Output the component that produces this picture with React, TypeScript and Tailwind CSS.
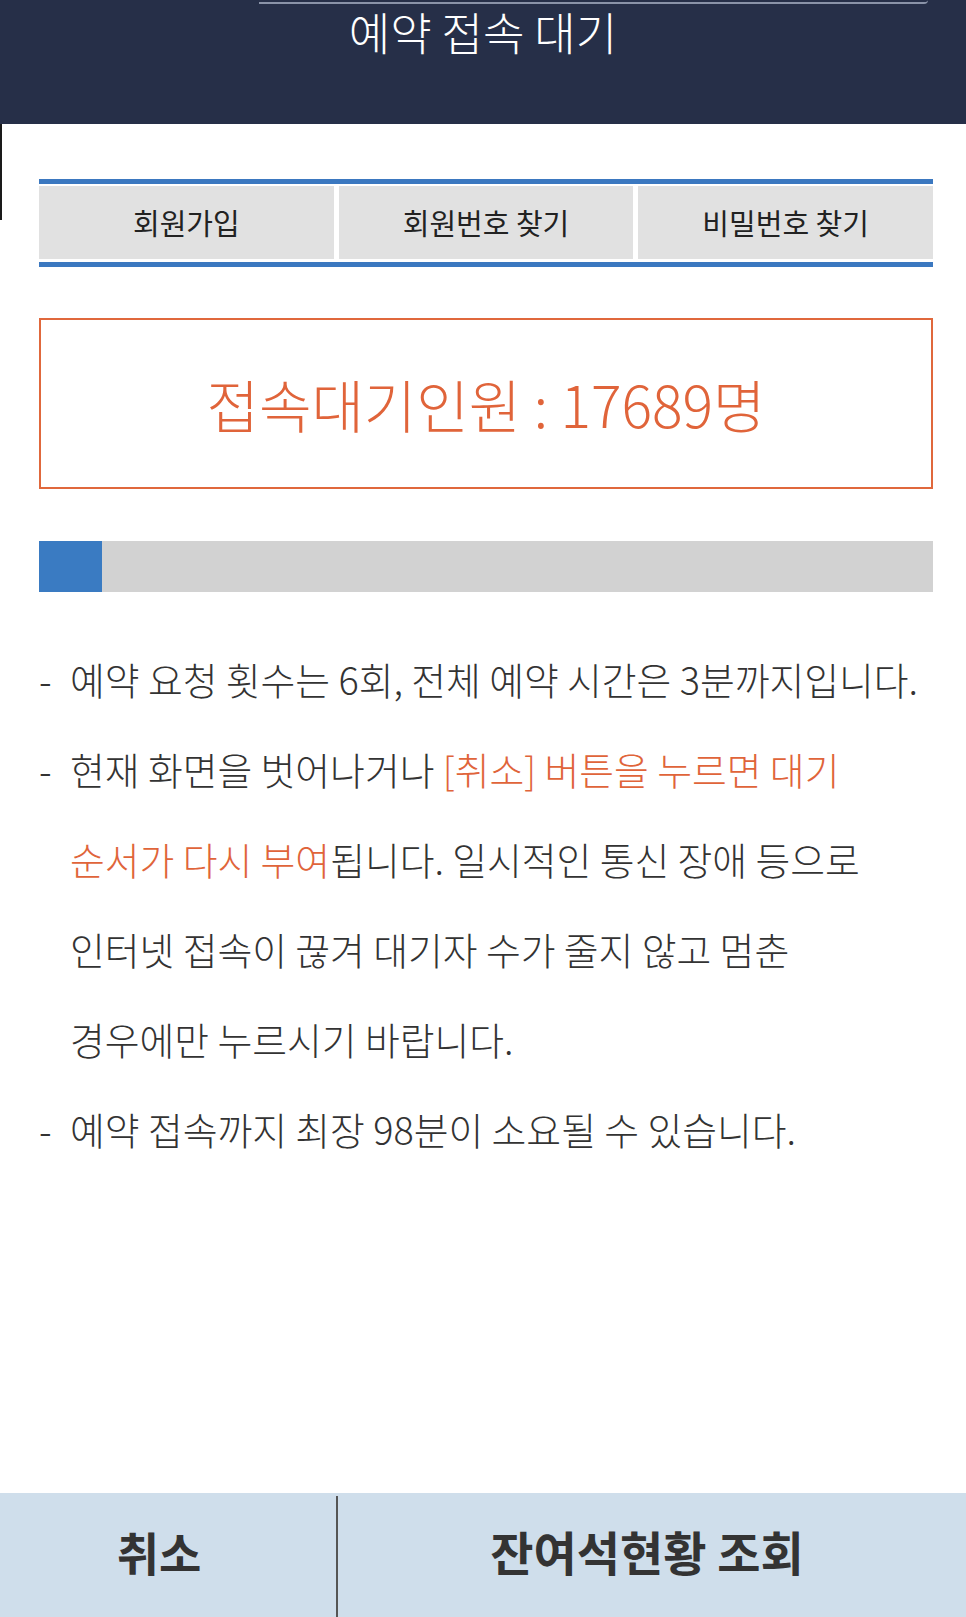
import React from "react";

const tabs = ["회원가입", "회원번호 찾기", "비밀번호 찾기"];

const Line = ({ dash, children }: { dash?: boolean; children: React.ReactNode }) => (
  <div className="flex h-[90px] items-center whitespace-nowrap">
    <span className="w-[31px] shrink-0">{dash ? "-" : ""}</span>
    <span>{children}</span>
  </div>
);

const App = () => {
  return (
    <div
      className="relative flex min-h-[1617px] w-full flex-col bg-white"
      style={{ fontFamily: '"Noto Sans CJK KR", "Noto Sans", sans-serif' }}
    >
      {/* header */}
      <div className="relative h-[124px] bg-[#262f48] text-center">
        <div className="absolute left-[259px] right-[38px] top-0 h-[4px] rounded-br-[10px] border-b-2 border-[#8a93a8]" />
        <h1 className="pt-[2px] text-[45px] leading-[60px] font-light text-white">예약 접속 대기</h1>
      </div>
      <div className="absolute left-0 top-[124px] h-[96px] w-[2px] bg-[#1a1a1a]" />

      <div className="ml-[39px] mr-[33px] flex flex-col">
        {/* tab menu */}
        <div className="mt-[55px] border-t-[5px] border-b-[5px] border-[#3b78c0]">
          <div className="grid grid-cols-3 gap-[5px] bg-white py-[2px] pb-[3px]">
            {tabs.map((t) => (
              <div
                key={t}
                className="flex h-[73px] items-center justify-center bg-[#e1e1e1] text-[29px] text-[#222]"
              >
                {t}
              </div>
            ))}
          </div>
        </div>

        {/* waiting count */}
        <div className="mt-[51px] flex h-[171px] items-center justify-center border-2 border-[#e0683c]">
          <span className="text-[57px] font-light text-[#e0643a]">접속대기인원 : 17689명</span>
        </div>

        {/* progress */}
        <div className="mt-[52px] h-[51px] bg-[#d2d2d2]">
          <div className="h-full bg-[#3a7bc2]" style={{ width: 63 }} />
        </div>

        {/* notices */}
        <div className="mt-[42px] text-[37.8px] font-light text-[#333]">
          <Line dash>예약 요청 횟수는 6회, 전체 예약 시간은 3분까지입니다.</Line>
          <Line dash>
            현재 화면을 벗어나거나 <span className="text-[#e0643a]">[취소] 버튼을 누르면 대기</span>
          </Line>
          <Line>
            <span className="text-[#e0643a]">순서가 다시 부여</span>됩니다. 일시적인 통신 장애 등으로
          </Line>
          <Line>인터넷 접속이 끊겨 대기자 수가 줄지 않고 멈춘</Line>
          <Line>경우에만 누르시기 바랍니다.</Line>
          <Line dash>예약 접속까지 최장 98분이 소요될 수 있습니다.</Line>
        </div>
      </div>

      {/* bottom buttons */}
      <div className="mt-auto flex h-[124px] bg-[#cfdeeb] text-[#333]">
        <button className="flex w-[336px] items-center justify-center pb-[8px] pr-[18px] text-[46px] font-bold">
          취소
        </button>
        <div className="mt-[3px] w-[2px] bg-[#555]" />
        <button className="flex flex-1 items-center justify-center pb-[8px] pr-[10px] text-[47px] font-bold">
          잔여석현황 조회
        </button>
      </div>
    </div>
  );
};

export default App;
